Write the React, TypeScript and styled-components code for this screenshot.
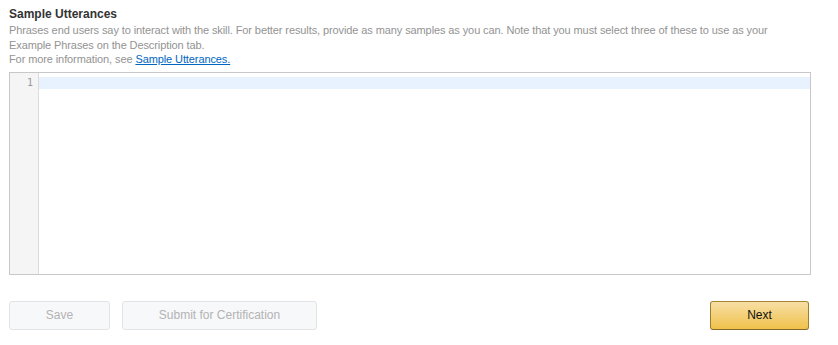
import styled, { createGlobalStyle } from "styled-components";

const GlobalStyle = createGlobalStyle`
  body {
    margin: 0;
    background: #fff;
    font-family: "Liberation Sans", Arial, sans-serif;
  }
`;

const Page = styled.div`
  padding: 7px 27px 0 9px;
  display: flex;
  flex-direction: column;
`;

const Title = styled.div`
  font-size: 12px;
  font-weight: bold;
  color: #333;
  line-height: 15px;
`;

const Description = styled.div`
  font-size: 11px;
  letter-spacing: -0.1px;
  color: #939393;
  line-height: 14.5px;
  margin-top: 1px;
`;

const Link = styled.a`
  color: #0066c0;
  text-decoration: underline;
`;

const Editor = styled.div`
  margin-top: 5px;
  height: 201px;
  border: 1px solid #c8c8c8;
  display: flex;
`;

const Gutter = styled.div`
  width: 28px;
  background: #f5f5f5;
  border-right: 1px solid #dcdcdc;
  padding-top: 4px;
`;

const LineNumber = styled.div`
  height: 12px;
  line-height: 12px;
  text-align: right;
  padding-right: 5px;
  font-family: "DejaVu Sans Mono", monospace;
  font-size: 10px;
  color: #999;
`;

const Content = styled.div`
  flex: 1;
  padding-top: 4px;
`;

const ActiveLine = styled.div`
  height: 12px;
  background: #e8f2fe;
`;

const Footer = styled.div`
  margin-top: 26px;
  display: flex;
  align-items: center;
  gap: 12px;
`;

const Button = styled.button<{ $width: number; $primary?: boolean }>`
  width: ${(p) => p.$width}px;
  height: 29px;
  border-radius: 3px;
  font-family: "Liberation Sans", Arial, sans-serif;
  font-size: 12px;
  cursor: ${(p) => (p.$primary ? "pointer" : "default")};
  border: 1px solid ${(p) => (p.$primary ? "#a88734" : "#e2e3e5")};
  color: ${(p) => (p.$primary ? "#111" : "#b3b3b3")};
  background: ${(p) =>
    p.$primary ? "linear-gradient(to bottom, #f7dfa5, #f0c14b)" : "#f7f8fa"};
  ${(p) =>
    p.$primary &&
    "margin-left: auto; margin-right: 2px; border-color: #a88734 #9c7e31 #846a29;"}
`;

export default function App() {
  return (
    <>
      <GlobalStyle />
      <Page>
        <Title>Sample Utterances</Title>
        <Description>
          Phrases end users say to interact with the skill. For better results, provide as many
          samples as you can. Note that you must select three of these to use as your Example
          Phrases on the Description tab.
          <br />
          For more information, see <Link href="#">Sample Utterances.</Link>
        </Description>
        <Editor>
          <Gutter>
            <LineNumber>1</LineNumber>
          </Gutter>
          <Content>
            <ActiveLine />
          </Content>
        </Editor>
        <Footer>
          <Button $width={101} disabled>
            Save
          </Button>
          <Button $width={195} disabled>
            Submit for Certification
          </Button>
          <Button $width={99} $primary>
            Next
          </Button>
        </Footer>
      </Page>
    </>
  );
}
